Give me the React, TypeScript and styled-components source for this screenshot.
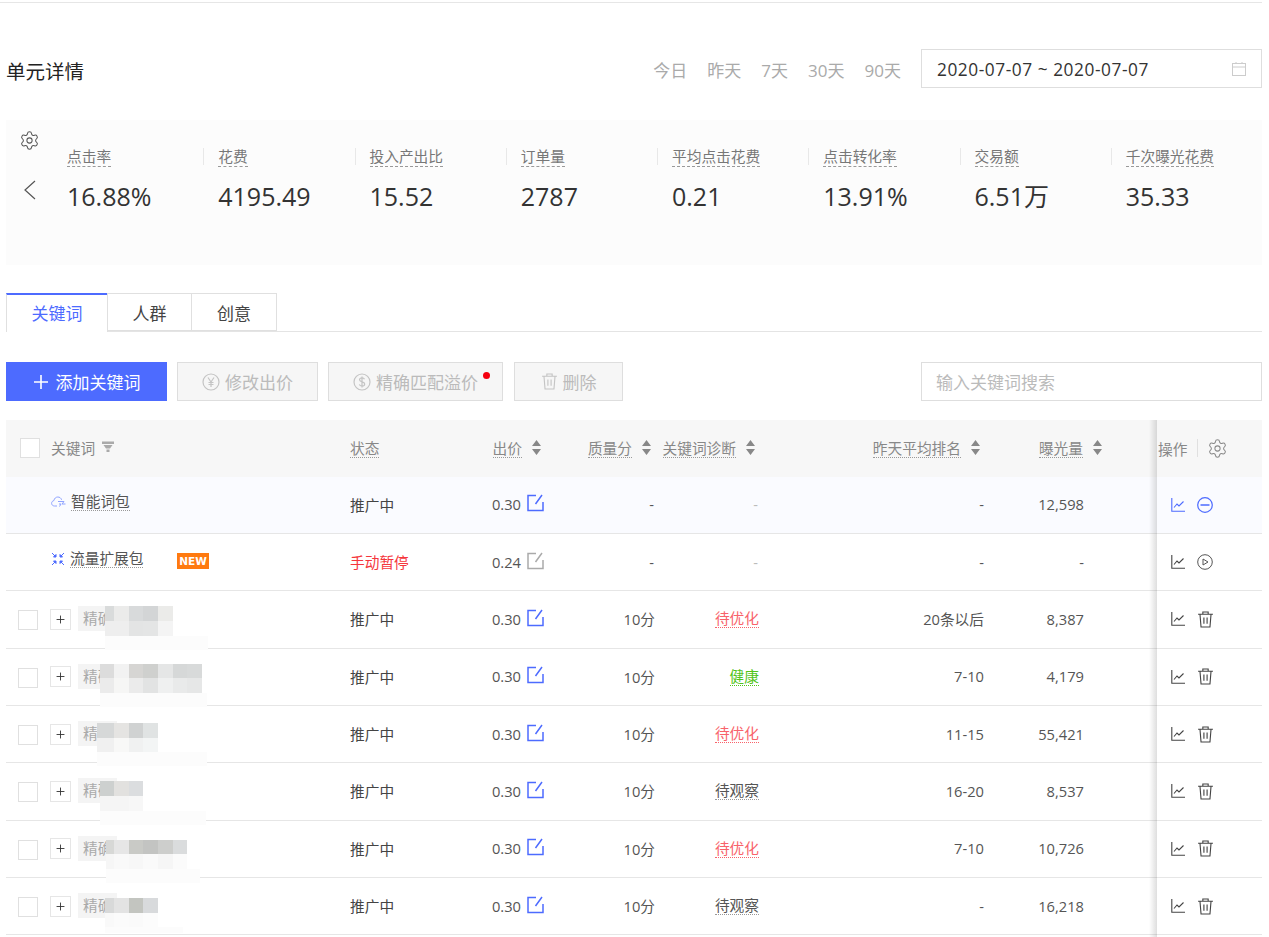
import React from "react";
import styled, { createGlobalStyle } from "styled-components";
import { Settings } from "lucide-react";

const Global = createGlobalStyle`
  html, body { margin: 0; padding: 0; background: #fff; }
  body { font-family: "Open Sans", "Noto Sans CJK SC", sans-serif; color: #333; }
  * { box-sizing: border-box; }
`;

const Page = styled.div`
  width: 1269px;
  height: 937px;
  overflow: hidden;
  padding: 2px 7px 0 6px;
`;
const TopRule = styled.div`
  height: 1px;
  background: #e6e6e6;
  margin-left: -6px;
`;
const Header = styled.div`
  display: flex;
  align-items: center;
  justify-content: space-between;
  height: 39px;
  margin-top: 46px;
`;
const Title = styled.h2`
  margin: 0;
  padding-top: 7px;
  font-size: 19.5px;
  line-height: 28px;
  font-weight: 400;
  color: #222;
`;
const RangeBar = styled.div`
  display: flex;
  align-items: center;
  gap: 20px;
`;
const QuickLink = styled.span`
  font-size: 17px;
  line-height: 24px;
  padding-top: 5px;
  color: #aaa;
`;
const DateInput = styled.div`
  width: 341px;
  height: 39px;
  border: 1px solid #dedede;
  display: flex;
  align-items: center;
  justify-content: space-between;
  padding: 0 15px;
  font-size: 17.3px;
  letter-spacing: 0.55px;
  color: #333;
`;
const DateText = styled.span`
  padding-top: 2px;
`;
const StatsPanel = styled.section`
  height: 145px;
  margin-top: 32px;
  background: #fcfcfc;
  display: flex;
`;
const StatsSide = styled.div`
  width: 46px;
  flex: none;
  padding: 10px 0 0 13px;
  color: #555;
  display: flex;
  flex-direction: column;
  gap: 29px;
`;
const ChevronWrap = styled.span`
  display: block;
  height: 20px;
  margin-left: 4px;
`;
const StatItem = styled.div<{ $first?: boolean }>`
  width: 151.25px;
  flex: none;
  padding: 25px 0 0 15px;
  position: relative;
  &::before {
    content: "";
    display: ${(p) => (p.$first ? "none" : "block")};
    position: absolute;
    left: 0;
    top: 28px;
    height: 17px;
    width: 1px;
    background: #e8e8e8;
  }
`;
const StatLabel = styled.span`
  font-size: 14.7px;
  line-height: 20px;
  color: #777;
  border-bottom: 1px dashed #999;
  display: inline-block;
`;
const StatValue = styled.div`
  font-size: 25px;
  line-height: 34px;
  margin-top: 12px;
  color: #333;
`;
const Tabs = styled.div`
  display: flex;
  height: 39px;
  margin-top: 28px;
  border-bottom: 1px solid #e4e4e4;
`;
const Tab = styled.div<{ $active?: boolean; $w: number }>`
  width: ${(p) => p.$w}px;
  height: ${(p) => (p.$active ? "39px" : "38px")};
  margin-left: ${(p) => (p.$active ? "0" : "-1px")};
  padding-bottom: ${(p) => (p.$active ? "3px" : "0")};
  background: #fff;
  border: 1px solid #e0e0e0;
  border-top: ${(p) => (p.$active ? "2px solid #4d6bff" : "1px solid #e0e0e0")};
  border-bottom: ${(p) => (p.$active ? "none" : "1px solid #e0e0e0")};
  display: flex;
  align-items: center;
  justify-content: center;
  font-size: 17px;
  color: ${(p) => (p.$active ? "#4d6bff" : "#444")};
`;
const Toolbar = styled.div`
  display: flex;
  align-items: center;
  height: 39px;
  margin-top: 30px;
`;
const PrimaryButton = styled.button`
  width: 161px;
  height: 39px;
  border: none;
  background: #4d6bff;
  color: #fff;
  font: inherit;
  font-size: 17px;
  display: flex;
  align-items: center;
  justify-content: center;
  gap: 7px;
  padding: 0;
`;
const GhostButton = styled.button<{ $w: number; $ml: number }>`
  position: relative;
  width: ${(p) => p.$w}px;
  height: 39px;
  margin-left: ${(p) => p.$ml}px;
  border: 1px solid #dedede;
  background: #f6f6f6;
  color: #bbb;
  font: inherit;
  font-size: 17px;
  display: flex;
  align-items: center;
  justify-content: center;
  gap: 5px;
  padding: 0;
`;
const RedDot = styled.i`
  position: absolute;
  right: 12px;
  top: 9px;
  width: 7px;
  height: 7px;
  border-radius: 50%;
  background: #f5000f;
`;
const SearchInput = styled.div`
  width: 341px;
  height: 39px;
  margin-left: auto;
  border: 1px solid #dedede;
  display: flex;
  align-items: center;
  padding: 0 14px;
  font-size: 17px;
  color: #bbb;
`;
const TableWrap = styled.div`
  position: relative;
  margin-top: 19px;
  &::after {
    content: "";
    position: absolute;
    top: 0;
    bottom: -4px;
    right: 105px;
    width: 8px;
    background: linear-gradient(to right, rgba(0, 0, 0, 0), rgba(0, 0, 0, 0.13));
    z-index: 2;
  }
`;
const COLUMNS = "344px 80px 115px 110px 104px 225px 118px 55px 105px";
const HeadRow = styled.div`
  display: grid;
  grid-template-columns: ${COLUMNS};
  height: 56.67px;
  background: #f7f7f7;
  font-size: 14.7px;
  color: #888;
`;
const Row = styled.div<{ $hl?: boolean }>`
  display: grid;
  grid-template-columns: ${COLUMNS};
  height: 57.33px;
  background: ${(p) => (p.$hl ? "#fafbff" : "#fff")};
  border-bottom: 1px solid #e6e6e6;
  font-size: 14.7px;
  color: #555;
`;
const Cell = styled.div<{ $pad?: number; $left?: boolean }>`
  display: flex;
  align-items: center;
  justify-content: ${(p) => (p.$left ? "flex-start" : "flex-end")};
  padding-right: ${(p) => p.$pad ?? 0}px;
  padding-bottom: 1px;
`;
const BidCell = styled(Cell)`
  gap: 6px;
  padding-right: 1px;
`;
const KeywordCell = styled.div`
  position: relative;
  display: flex;
  align-items: center;
`;
const HeadKeyword = styled(KeywordCell)`
  padding-left: 14px;
`;
const OpsCell = styled.div`
  display: flex;
  align-items: center;
  gap: 12px;
  padding-left: 14px;
`;
const HeadOps = styled(OpsCell)`
  padding-left: 1px;
  gap: 0;
  color: #888;
`;
const OpsDivider = styled.i`
  width: 1px;
  height: 18px;
  margin: 0 9px 0 10px;
  background: #e0e0e0;
`;
const Check = styled.span<{ $ml: number; $mt?: number }>`
  width: 20px;
  height: 20px;
  flex: none;
  margin-left: ${(p) => p.$ml}px;
  margin-top: ${(p) => p.$mt ?? 0}px;
  border: 1.5px solid #e0e0e0;
  background: #fff;
`;
const Expand = styled.span`
  width: 21px;
  height: 21px;
  flex: none;
  margin-left: 12px;
  border: 1px solid #e6e6e6;
  background: #fff;
  color: #333;
  display: flex;
  align-items: center;
  justify-content: center;
`;
const MatchTag = styled.span`
  height: 25px;
  white-space: nowrap;
  margin-left: 7px;
  padding: 0 5px;
  margin-top: -1px;
  line-height: 25px;
  background: #f4f4f4;
  color: #aaa;
`;
const Dotted = styled.span<{ $c?: string }>`
  color: ${(p) => p.$c ?? "inherit"};
  border-bottom: 1px dotted ${(p) => p.$c ?? "#999"};
  line-height: 18px;
  display: inline-block;
  white-space: nowrap;
`;
const HeadLabel = styled(Dotted)`
  margin-top: 2px;
`;
const SpecialName = styled.div`
  display: flex;
  align-items: center;
  gap: 5px;
  margin: -7px 0 0 45px;
  color: #555;
`;
const NewBadge = styled.span`
  position: absolute;
  left: 171px;
  top: 19px;
  width: 32px;
  height: 16px;
  background: #ff7a0f;
  color: #fff;
  font-family: "DejaVu Sans", sans-serif;
  font-size: 10.5px;
  font-weight: 700;
  line-height: 16px;
  text-align: center;
`;
const HeadText = styled.span`
  margin: -2px 0 0 11px;
  color: #888;
`;
const FilterWrap = styled.span`
  display: inline-flex;
  margin: -2px 0 0 7px;
  color: #aaa;
`;
const SortWrap = styled.span`
  display: inline-flex;
  margin-left: 10px;
  color: #888;
`;
const StatusLeft = styled(Cell)`
  color: #444;
`;
const PausedText = styled.span`
  color: #f5363c;
`;
const LightDash = styled.span`
  color: #bbb;
`;
const Mosaic = styled.div<{ $x: number; $y: number }>`
  position: absolute;
  left: ${(p) => p.$x}px;
  top: ${(p) => p.$y}px;
  z-index: 3;
`;
const MosaicLine = styled.div`
  display: flex;
`;
const MosaicCell = styled.i<{ $c: string; $w: number }>`
  width: ${(p) => p.$w}px;
  height: 14.67px;
  background: ${(p) => p.$c};
`;
const Halo = styled.div<{ $w: number; $h: number }>`
  width: ${(p) => p.$w}px;
  height: ${(p) => p.$h}px;
  background: #fcfcfc;
`;

const Gear = () => <Settings size={21} strokeWidth={1.15} />;
const Chevron = () => (
  <svg width="13" height="20" viewBox="0 0 13 20" fill="none" stroke="currentColor" strokeWidth="1.2">
    <path d="M12 1 2 10l10 9" />
  </svg>
);
const Calendar = () => (
  <svg width="14" height="14" viewBox="0 0 14 14" fill="none" stroke="#ccc" strokeWidth="1">
    <rect x="0.5" y="1.5" width="13" height="12" />
    <path d="M0.5 5h13M4 0v2M10 0v2" />
  </svg>
);
const Plus = ({ s = 16 }: { s?: number }) => (
  <svg width={s} height={s} viewBox="0 0 16 16" stroke="currentColor" strokeWidth="1.6">
    <path d="M8 1v14M1 8h14" />
  </svg>
);
const CoinIcon = ({ sign }: { sign: string }) => (
  <svg width="18" height="18" viewBox="0 0 18 18" fill="none" stroke="#c4c4c4" strokeWidth="1.2">
    <circle cx="9" cy="9" r="8" />
    {sign === "yen" ? (
      <path d="M6 4.500 9 9l3-4.500M9 9v5M6.500 9.500h5M6.500 11.500h5" />
    ) : (
      <path d="M11.500 6.200C11 5 9.800 4.800 9 4.800c-1.500 0-2.500.8-2.500 2 0 2.700 5.200 1.400 5.200 4.200 0 1.300-1.200 2.100-2.700 2.100-1.100 0-2.200-.5-2.700-1.500M9 3.500v11" />
    )}
  </svg>
);
const Trash = ({ c = "currentColor", s = 17 }: { c?: string; s?: number }) => (
  <svg width={s} height={s} viewBox="0 0 16 16" fill="none" stroke={c} strokeWidth="1.050">
    <path d="M1 3h14M5.500 3V1h5v2M2.800 3l1 12h8.400l1-12M6.500 6v6M9.500 6v6" />
  </svg>
);
const Funnel = () => (
  <svg width="12" height="12" viewBox="0 0 12 12" fill="currentColor">
    <path d="M0 .5h12V3H0zM1.500 4h9L8 7.500H4zM4.500 8.500h3V11h-3z" />
  </svg>
);
const Sort = () => (
  <svg width="9" height="15" viewBox="0 0 9 15" fill="currentColor">
    <path d="M4.500 0 9 6H0zM4.500 15 0 9h9z" />
  </svg>
);
const Edit = ({ c }: { c: string }) => (
  <svg width="17" height="18" viewBox="0 0 17 18" fill="none" stroke={c} strokeWidth="1.500" style={{ marginTop: -2 }}>
    <path d="M9 1.500H1v15h15V8M15 1l-6.500 9" />
  </svg>
);
const Chart = ({ c }: { c: string }) => (
  <svg width="14" height="14" viewBox="0 0 14 14" fill="none" stroke={c} strokeWidth="1.100">
    <path d="M.8 0v13.200H14" />
    <path d="M3 9.500 6 6l2 2 4.500-4.500" />
  </svg>
);
const MinusCircle = () => (
  <svg width="16" height="16" viewBox="0 0 16 16" fill="none" stroke="#4d6bff" strokeWidth="1.200">
    <circle cx="8" cy="8" r="7.300" />
    <path d="M3.500 8h9" strokeWidth="1.500" />
  </svg>
);
const PlayCircle = () => (
  <svg width="16" height="16" viewBox="0 0 16 16" fill="none" stroke="#555" strokeWidth="1">
    <circle cx="8" cy="8" r="7.300" />
    <path d="M6 5v6l5-3z" />
  </svg>
);
const CloudIcon = () => (
  <svg width="15" height="13" viewBox="0 0 15 13" fill="none" stroke="#8fa3ff" strokeWidth="1">
    <path d="M6 11H3.500C1.800 11 .6 9.800.6 8.300c0-1.400 1-2.500 2.300-2.700C3.300 3.500 4.800 2 6.800 2c1.800 0 3.300 1.100 3.800 2.800M7 6.500h6L11 9h3.500M8 9h2l-1.500 2.500" />
  </svg>
);
const ShrinkIcon = () => (
  <svg width="14" height="14" viewBox="0 0 14 14" fill="#4d6bff" stroke="#4d6bff" strokeWidth="1">
    <path d="M1 1l3.500 3.500M13 1 9.500 4.500M1 13l3.500-3.500M13 13 9.500 9.500" fill="none" />
    <path d="M5 2.500V5H2.500zM9 2.500V5h2.500zM5 11.500V9H2.500zM9 11.500V9h2.500z" />
  </svg>
);

const stats = [
  ["点击率", "16.88%"],
  ["花费", "4195.49"],
  ["投入产出比", "15.52"],
  ["订单量", "2787"],
  ["平均点击花费", "0.21"],
  ["点击转化率", "13.91%"],
  ["交易额", "6.51万"],
  ["千次曝光花费", "35.33"],
];

type M = { x: number; y: number; first: number; a: string[]; b: string[]; hw: number; hh: number };
type R = { rank: string; imp: string; diag: string; c?: string; m: M };

const rows: R[] = [
  { rank: "20条以后", imp: "8,387", diag: "待优化", c: "#f8636b", m: { x: 99, y: 15, first: 9, a: ["#d9dbdb", "#ebebea", "#d8dadb", "#d3d5d6", "#ebebe9"], b: ["#eeeeee", "#eeeeee", "#e3e4e4", "#e4e5e5", "#f4f4f4"], hw: 103, hh: 14 } },
  { rank: "7-10", imp: "4,179", diag: "健康", c: "#52c41a", m: { x: 94, y: 15, first: 14, a: ["#dcdcdc", "#f2f2f2", "#d6d5d3", "#cfd0ce", "#e5e6e6", "#d6d8d8", "#d8dada"], b: ["#ebebeb", "#f6f6f5", "#ebebeb", "#e2e3e3", "#eff0f0", "#e9eaea", "#e6e7e7"], hw: 107, hh: 14 } },
  { rank: "11-15", imp: "55,421", diag: "待优化", c: "#f8636b", m: { x: 91, y: 17, first: 17, a: ["#d6d8d8", "#e5e4e2", "#d0d2d2", "#e0e3e3"], b: ["#f0f0f0", "#f8f8f7", "#f0f1f1", "#f3f5f5"], hw: 110, hh: 14 } },
  { rank: "16-20", imp: "8,537", diag: "待观察", m: { x: 94, y: 18, first: 14, a: ["#cdd0cf", "#e2e1df", "#dbdddf"], b: ["#f5f5f5", "#f5f5f5", "#f7f7f7"], hw: 106, hh: 14 } },
  { rank: "7-10", imp: "10,726", diag: "待优化", c: "#f8636b", m: { x: 100, y: 19, first: 8, a: ["#d7d8d6", "#e6e6e6", "#c9cac6", "#c3c4c2", "#cdcecc", "#dadcdd"], b: ["#f6f6f6", "#f9f9f9", "#f7f7f7", "#fafafa", "#f6f6f6", "#fbfbfb"], hw: 94, hh: 14 } },
  { rank: "-", imp: "16,218", diag: "待观察", m: { x: 99, y: 20, first: 9, a: ["#d8d9d9", "#e3e3e3", "#c3c5c0", "#d8dadc"], b: ["#f9f9f9", "#fbfbfb", "#fafafa", "#fcfcfc"], hw: 78, hh: 6 } },
];

const HeadSorted = ({ label, pad }: { label: string; pad: number }) => (
  <Cell $pad={pad}>
    <HeadLabel>{label}</HeadLabel>
    <SortWrap>
      <Sort />
    </SortWrap>
  </Cell>
);

export default function App() {
  return (
    <Page>
      <Global />
      <TopRule />
      <Header>
        <Title>单元详情</Title>
        <RangeBar>
          {["今日", "昨天", "7天", "30天", "90天"].map((t) => (
            <QuickLink key={t}>{t}</QuickLink>
          ))}
          <DateInput>
            <DateText>2020-07-07 ~ 2020-07-07</DateText>
            <Calendar />
          </DateInput>
        </RangeBar>
      </Header>
      <StatsPanel>
        <StatsSide>
          <Gear />
          <ChevronWrap>
            <Chevron />
          </ChevronWrap>
        </StatsSide>
        {stats.map(([label, value], i) => (
          <StatItem key={label} $first={i === 0}>
            <StatLabel>{label}</StatLabel>
            <StatValue>{value}</StatValue>
          </StatItem>
        ))}
      </StatsPanel>
      <Tabs>
        <Tab $active $w={102}>关键词</Tab>
        <Tab $w={85}>人群</Tab>
        <Tab $w={86}>创意</Tab>
      </Tabs>
      <Toolbar>
        <PrimaryButton>
          <Plus />
          添加关键词
        </PrimaryButton>
        <GhostButton $w={141} $ml={10}>
          <CoinIcon sign="yen" />
          修改出价
        </GhostButton>
        <GhostButton $w={175} $ml={10}>
          <CoinIcon sign="usd" />
          精确匹配溢价
          <RedDot />
        </GhostButton>
        <GhostButton $w={109} $ml={11}>
          <Trash c="#c4c4c4" s={17} />
          删除
        </GhostButton>
        <SearchInput>输入关键词搜索</SearchInput>
      </Toolbar>
      <TableWrap>
        <HeadRow>
          <HeadKeyword>
            <Check $ml={0} />
            <HeadText>关键词</HeadText>
            <FilterWrap>
              <Funnel />
            </FilterWrap>
          </HeadKeyword>
          <Cell $left>
            <HeadLabel>状态</HeadLabel>
          </Cell>
          <HeadSorted label="出价" pad={4} />
          <HeadSorted label="质量分" pad={4} />
          <HeadSorted label="关键词诊断" pad={4} />
          <HeadSorted label="昨天平均排名" pad={4} />
          <HeadSorted label="曝光量" pad={0} />
          <div />
          <HeadOps>
            操作
            <OpsDivider />
            <Gear />
          </HeadOps>
        </HeadRow>
        <Row $hl>
          <KeywordCell>
            <SpecialName>
              <CloudIcon />
              <Dotted>智能词包</Dotted>
            </SpecialName>
          </KeywordCell>
          <StatusLeft $left>推广中</StatusLeft>
          <BidCell>
            0.30
            <Edit c="#4d6bff" />
          </BidCell>
          <Cell $pad={1}>-</Cell>
          <Cell $pad={1}>
            <LightDash>-</LightDash>
          </Cell>
          <Cell>-</Cell>
          <Cell $pad={18}>12,598</Cell>
          <div />
          <OpsCell>
            <Chart c="#4d6bff" />
            <MinusCircle />
          </OpsCell>
        </Row>
        <Row>
          <KeywordCell>
            <SpecialName>
              <ShrinkIcon />
              <Dotted>流量扩展包</Dotted>
            </SpecialName>
            <NewBadge>NEW</NewBadge>
          </KeywordCell>
          <StatusLeft $left>
            <PausedText>手动暂停</PausedText>
          </StatusLeft>
          <BidCell>
            0.24
            <Edit c="#aaa" />
          </BidCell>
          <Cell $pad={1}>-</Cell>
          <Cell $pad={1}>
            <LightDash>-</LightDash>
          </Cell>
          <Cell>-</Cell>
          <Cell $pad={18}>-</Cell>
          <div />
          <OpsCell>
            <Chart c="#444" />
            <PlayCircle />
          </OpsCell>
        </Row>
        {rows.map((r, i) => (
          <Row key={i}>
            <KeywordCell>
              <Check $ml={12} $mt={2} />
              <Expand>
                <Plus s={9} />
              </Expand>
              <MatchTag>精确</MatchTag>
              <Mosaic $x={r.m.x} $y={r.m.y}>
                {[r.m.a, r.m.b].map((line, li) => (
                  <MosaicLine key={li}>
                    {line.map((c, ci) => (
                      <MosaicCell key={ci} $c={c} $w={ci === 0 ? r.m.first : 14.67} />
                    ))}
                  </MosaicLine>
                ))}
                <Halo $w={r.m.hw} $h={r.m.hh} />
              </Mosaic>
            </KeywordCell>
            <StatusLeft $left>推广中</StatusLeft>
            <BidCell>
              0.30
              <Edit c="#4d6bff" />
            </BidCell>
            <Cell>10分</Cell>
            <Cell>
              <Dotted $c={r.c}>{r.diag}</Dotted>
            </Cell>
            <Cell>{r.rank}</Cell>
            <Cell $pad={18}>{r.imp}</Cell>
            <div />
            <OpsCell>
              <Chart c="#444" />
              <Trash c="#444" />
            </OpsCell>
          </Row>
        ))}
      </TableWrap>
    </Page>
  );
}
